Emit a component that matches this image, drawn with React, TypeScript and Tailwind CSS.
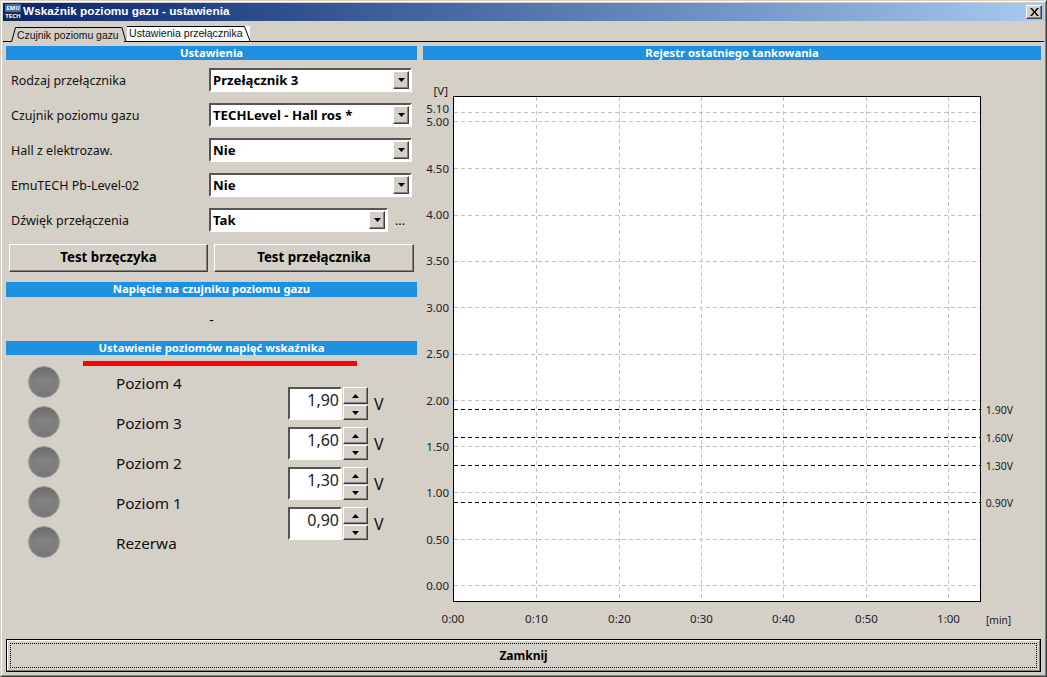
import React from 'react';

const ui = { fontFamily: '"Noto Sans", sans-serif' };
const tahomaNarrow = { fontFamily: '"Liberation Sans", sans-serif' };

const sunken = 'border-2 border-t-[#555] border-l-[#555] border-r-white border-b-white';
const raised =
  'bg-[#d4d0c8] border border-t-white border-l-white border-r-[#404040] border-b-[#404040] shadow-[inset_-1px_-1px_0_#808080]';

const Arrow = ({ up = false }: { up?: boolean }) => (
  <svg width="7" height="4" viewBox="0 0 7 4">
    <path d={up ? 'M3.500 0L7 4H0z' : 'M0 0h7L3.500 4z'} fill="#000" />
  </svg>
);

const SectionHeader = ({ title, h = 14 }: { title: string; h?: number }) => (
  <div
    className={`flex items-center justify-center bg-[#1e8fe1] pb-[1px] text-[11.300px] leading-none font-bold text-white ${
      h === 15 ? 'h-[15px]' : 'h-[14px]'
    }`}
  >
    {title}
  </div>
);

const ComboRow = ({ label, value, short = false }: { label: string; value: string; short?: boolean }) => (
  <div className="flex h-[24px] items-center">
    <span className="w-[203px] pl-[5px] pt-[2px] text-[12.500px] text-[#111]">{label}</span>
    <div className={`flex h-[24px] items-center bg-white ${sunken} ${short ? 'w-[179px]' : 'w-[203px]'}`}>
      <span className="flex-1 pl-[2px] pt-[1px] text-[13.200px] font-bold text-black">{value}</span>
      <div className={`mr-[1px] flex h-[18px] w-[16px] items-center justify-center ${raised}`}>
        <Arrow />
      </div>
    </div>
    {short && <span className="ml-[7px] pt-[2px] text-[12.500px] text-black">...</span>}
  </div>
);

const Led = () => (
  <svg width="32" height="32" viewBox="0 0 32 32">
    <defs>
      <linearGradient id="led" x1="0" y1="0" x2="0" y2="1">
        <stop offset="0%" stopColor="#6c6c6c" />
        <stop offset="50%" stopColor="#808080" />
        <stop offset="100%" stopColor="#777777" />
      </linearGradient>
    </defs>
    <circle cx="16" cy="16" r="15.500" fill="url(#led)" stroke="#a0a0a0" strokeWidth="1" />
    <path d="M6 12C10 10 22 10 26 12C23 15 19 15 17 18L15 18C13 15 9 15 6 12z" fill="#868686" opacity="0.6" />
  </svg>
);

const Spinner = ({ value }: { value: string }) => (
  <div className="flex h-[33px] items-start">
    <div className={`h-[33px] w-[54px] bg-white pr-[1px] text-right text-[16px] leading-[23px] text-[#222] ${sunken}`}>
      {value}
    </div>
    <div className="ml-[1px] flex w-[25px] flex-col">
      <div className={`flex h-[17px] items-center justify-center ${raised}`}>
        <Arrow up />
      </div>
      <div className={`mt-[1px] flex h-[15px] items-center justify-center ${raised}`}>
        <Arrow />
      </div>
    </div>
    <span className="ml-[6px] mt-[6px] text-[16px] leading-[22px] text-[#111]">V</span>
  </div>
);

const levels = ['Poziom 4', 'Poziom 3', 'Poziom 2', 'Poziom 1', 'Rezerwa'];
const spinners = ['1,90', '1,60', '1,30', '0,90'];

const gridY: [number, string, number][] = [
  [112.5, '5.10', 109],
  [121.5, '5.00', 122],
  [168.5, '4.50', 169],
  [215.5, '4.00', 215],
  [261.5, '3.50', 261],
  [307.5, '3.00', 308],
  [354.5, '2.50', 354],
  [400.5, '2.00', 401],
  [446.5, '1.50', 447],
  [492.5, '1.00', 493],
  [539.5, '0.50', 540],
  [585.5, '0.00', 586],
];
const gridX: [number, string][] = [
  [453, '0:00'],
  [536.5, '0:10'],
  [619.5, '0:20'],
  [701.5, '0:30'],
  [783.5, '0:40'],
  [866.5, '0:50'],
  [948.5, '1:00'],
];
const thresholds: [number, string][] = [
  [409.5, '1.90V'],
  [437.5, '1.60V'],
  [465.5, '1.30V'],
  [502.5, '0.90V'],
];

const Chart = () => (
  <svg width="618" height="579" viewBox="423 60 618 579" className="block" style={ui}>
    <rect x="453.5" y="96.500" width="527" height="505" fill="#fff" stroke="#000" />
    {gridY.map(([y, label, ty]) => (
      <g key={label}>
        <line x1="454" x2="980" y1={y} y2={y} stroke="#c0c0c0" strokeDasharray="4 3" />
        <text x="449" y={ty} dy="0.35em" textAnchor="end" fontSize="11.500" fill="#222">
          {label}
        </text>
      </g>
    ))}
    {gridX.map(([x, label]) => (
      <g key={label}>
        {x > 454 && <line x1={x} x2={x} y1="97" y2="601" stroke="#c0c0c0" strokeDasharray="4 3" />}
        <text x={x} y="623" textAnchor="middle" fontSize="11.500" fill="#222">
          {label}
        </text>
      </g>
    ))}
    {thresholds.map(([y, label]) => (
      <g key={label}>
        <line x1="454" x2="980" y1={y} y2={y} stroke="#000" strokeDasharray="4 3" />
        <text x="1013" y={y + 1} dy="0.35em" textAnchor="end" fontSize="10.500" fill="#222">
          {label}
        </text>
      </g>
    ))}
    <text x="448" y="95" textAnchor="end" fontSize="11.500" fill="#222">
      [V]
    </text>
    <text x="986" y="624" fontSize="10.200" fill="#222">
      [min]
    </text>
  </svg>
);

export default function App() {
  return (
    <div
      className="h-[677px] w-[1047px] overflow-hidden border border-t-[#d4d0c8] border-l-[#d4d0c8] border-r-[#404040] border-b-[#404040] bg-[#d4d0c8]"
      style={ui}
    >
      <div className="h-full border border-t-white border-l-white border-r-[#808080] border-b-[#808080] p-[1px]">
        {/* title bar */}
        <div className="flex h-[18px] items-center bg-gradient-to-r from-[#0a246a] to-[#a6caf0] pl-[2px] pr-[2px]">
          <div className="flex h-[16px] w-[16px] flex-col items-center text-[6px] font-bold leading-[8px] text-white">
            <span className="h-[8px] w-full bg-[#3f6cab] text-center">EMU</span>
            <span className="h-[8px] w-full bg-[#1f2a3c] text-center">TECH</span>
          </div>
          <span className="ml-[2px] flex-1 pb-[1px] text-[11.800px] font-bold text-white" style={tahomaNarrow}>
            Wskaźnik poziomu gazu - ustawienia
          </span>
          <div className={`flex h-[14px] w-[16px] items-center justify-center ${raised}`}>
            <svg width="9" height="8" viewBox="0 0 9 8">
              <path d="M0 0h2l2.500 3L7 0h2L5.500 4 9 8H7L4.500 5 2 8H0l3.500-4z" fill="#000" />
            </svg>
          </div>
        </div>

        {/* tab strip */}
        <div className="flex h-[21px] items-end border-b border-black pl-[8px]" style={tahomaNarrow}>
          <div className="relative -mb-[1px] h-[15px] w-[113px] bg-[#d4d0c8] pl-[6px] pt-[1px] text-[10.400px] leading-[15px] text-[#111]">
            <svg width="117" height="16" viewBox="0 0 117 16" className="absolute left-0 top-0 overflow-visible">
              <path d="M0.500 15L4.500 0.500H111L115 15" fill="none" stroke="#000" />
            </svg>
            <span className="relative whitespace-nowrap">Czujnik poziomu gazu</span>
          </div>
          <div className="relative ml-[3px] h-[15px] w-[123px] bg-white pl-[2px] text-[10.600px] leading-[15px] text-[#111]">
            <svg width="123" height="15" viewBox="0 0 123 15" className="absolute left-0 top-0 overflow-visible">
              <path d="M0 0.500H117.500L123 15" fill="none" stroke="#000" />
            </svg>
            <span className="relative whitespace-nowrap">Ustawienia przełącznika</span>
          </div>
        </div>

        {/* main */}
        <div className="flex gap-[6px] pl-[3px] pt-[4px]">
          <div className="w-[411px]">
            <SectionHeader title="Ustawienia" />
            <div className="mt-[8px] flex flex-col gap-[11px]">
              <ComboRow label="Rodzaj przełącznika" value="Przełącznik 3" />
              <ComboRow label="Czujnik poziomu gazu" value="TECHLevel - Hall ros *" />
              <ComboRow label="Hall z elektrozaw." value="Nie" />
              <ComboRow label="EmuTECH Pb-Level-02" value="Nie" />
              <ComboRow label="Dźwięk przełączenia" value="Tak" short />
            </div>
            <div className="ml-[3px] mt-[12px] flex gap-[6px]">
              <div className={`flex h-[28px] w-[199px] items-center justify-center text-[13.300px] font-bold text-black ${raised}`}>
                Test brzęczyka
              </div>
              <div className={`flex h-[28px] w-[200px] items-center justify-center text-[13.300px] font-bold text-black ${raised}`}>
                Test przełącznika
              </div>
            </div>
            <div className="mt-[10px]">
              <SectionHeader title="Napięcie na czujniku poziomu gazu" h={15} />
            </div>
            <div className="flex h-[44px] items-center justify-center text-[14px] text-black">-</div>
            <SectionHeader title="Ustawienie poziomów napięć wskaźnika" />
            <div className="ml-[77px] mt-[6px] h-[5px] w-[274px] bg-[#ff0000]" />
            <div className="flex">
              <div className="ml-[22px] flex w-[32px] flex-col">
                {levels.map((l) => (
                  <div key={l} className="h-[40px]">
                    <Led />
                  </div>
                ))}
              </div>
              <div className="ml-[56px] flex w-[172px] flex-col">
                {levels.map((l) => (
                  <div key={l} className="flex h-[40px] items-start pt-[6px] text-[15.300px] leading-[22px] text-[#111]">
                    {l}
                  </div>
                ))}
              </div>
              <div className="mt-[21px] flex flex-col gap-[7px]">
                {spinners.map((v) => (
                  <Spinner key={v} value={v} />
                ))}
              </div>
            </div>
          </div>

          <div className="w-[618px]">
            <SectionHeader title="Rejestr ostatniego tankowania" />
            <Chart />
          </div>
        </div>

        {/* close button */}
        <div className="ml-[3px] w-[1035px] border border-black bg-black">
          <div className="h-[31px] border border-t-white border-l-white border-r-[#808080] border-b-[#808080] bg-[#d4d0c8] p-[2px]">
            <div className="flex h-full items-center justify-center border border-dotted border-black text-[12px] font-bold text-black">
              Zamknij
            </div>
          </div>
        </div>
      </div>
    </div>
  );
}
